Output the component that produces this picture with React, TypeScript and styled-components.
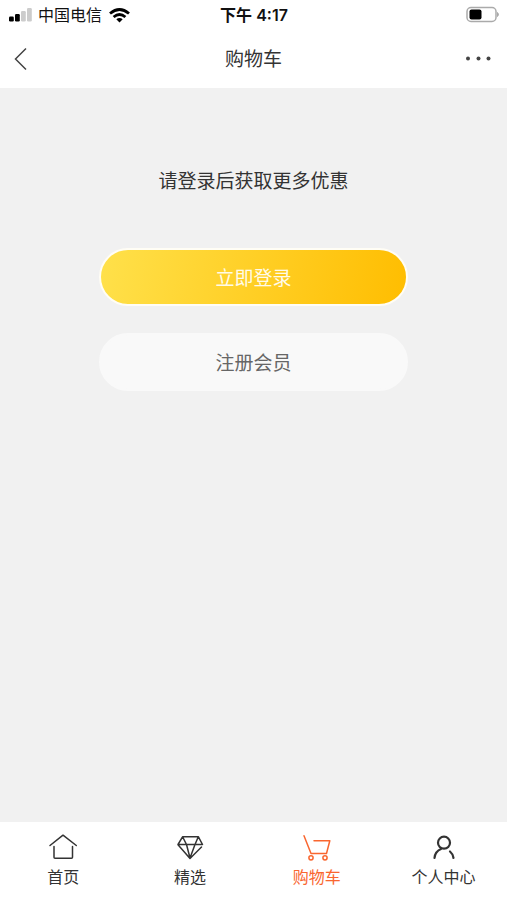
import React from "react";
import styled, { createGlobalStyle } from "styled-components";

const GlobalStyle = createGlobalStyle`
  * { box-sizing: border-box; }
  body {
    margin: 0;
    background: #f1f1f1;
    color: #333;
    font-family: "Liberation Sans", "Noto Sans CJK SC", sans-serif;
  }
  button { font-family: inherit; }
`;

const Screen = styled.div`
  display: flex;
  flex-direction: column;
  min-height: 100vh;
`;

const StatusBar = styled.div`
  display: grid;
  grid-template-columns: 1fr auto 1fr;
  align-items: center;
  height: 30px;
  padding: 0 8px 0 9px;
  background: #fff;
  color: #111;
  font: 500 16px/24px Inter, "Noto Sans CJK SC", sans-serif;
`;

const Carrier = styled.div`
  display: flex;
  align-items: center;
  gap: 6px;
  font-weight: 400;
`;

const Clock = styled.time`
  font-weight: 600;
`;

const Battery = styled.svg`
  justify-self: end;
`;

const Header = styled.header`
  display: grid;
  grid-template-columns: 1fr auto 1fr;
  align-items: center;
  height: 58px;
  padding: 0 13px;
  background: #fff;
`;

const Title = styled.h1`
  margin: 0;
  padding-top: 2px;
  font-size: 19px;
  line-height: 28px;
  font-weight: 400;
`;

const IconButton = styled.button<{ $end?: boolean }>`
  display: flex;
  justify-self: ${(p) => (p.$end ? "end" : "start")};
  padding: 0;
  border: 0;
  background: none;
  color: #444;
  cursor: pointer;
`;

const Content = styled.main`
  flex: 1;
  display: flex;
  flex-direction: column;
  align-items: center;
  padding-top: 80px;
`;

const Prompt = styled.p`
  margin: 0 0 52px;
  font-size: 19px;
  line-height: 28px;
`;

const Actions = styled.div`
  display: flex;
  flex-direction: column;
  gap: 27px;
  width: 61%;
`;

const Action = styled.button<{ $primary?: boolean }>`
  height: 58px;
  padding: 4px 0 0;
  border: 2px solid ${(p) => (p.$primary ? "#fffdf5" : "#f9f9f9")};
  border-radius: 29px;
  background: ${(p) =>
    p.$primary ? "linear-gradient(100deg, #ffe14b, #ffbd00) border-box" : "#f9f9f9"};
  color: ${(p) => (p.$primary ? "#fffbe8" : "#666")};
  font-size: 19px;
  line-height: 28px;
  cursor: pointer;
`;

const TabBar = styled.nav`
  display: grid;
  grid-template-columns: repeat(4, 1fr);
  height: 78px;
  padding-top: 9px;
  background: #fff;
`;

const Tab = styled.a<{ $active?: boolean }>`
  display: flex;
  flex-direction: column;
  align-items: center;
  gap: 3px;
  color: ${(p) => (p.$active ? "#f9662f" : "#333")};
  font-size: 16px;
  line-height: 24px;
  text-decoration: none;
`;

const LineIcon = styled.svg<{ $bold?: boolean }>`
  width: 32px;
  height: 32px;
  fill: none;
  stroke: currentColor;
  stroke-width: ${(p) => (p.$bold ? 2.2 : 1.5)};
  stroke-linecap: round;
  stroke-linejoin: round;
`;

const HomeIcon = () => (
  <LineIcon viewBox="0 0 32 32" aria-hidden="true">
    <path d="M3 14.5 16 4.2l13.3 10.3M7 15.5v10.8q0 1 1 1h16.5q1 0 1-1V15.5" />
  </LineIcon>
);

const DiamondIcon = () => (
  <LineIcon viewBox="0 0 32 32" aria-hidden="true">
    <path d="M28.5 13.5H4l4.7-7.8h15.6l4.2 7.8M4 13.7 16 27.5l11.5-11.5M8.7 6l3.8 7.5L16 27l5-13.5L24.2 6" />
  </LineIcon>
);

const CartIcon = () => (
  <LineIcon viewBox="0 0 32 32" aria-hidden="true">
    <path d="M3 4.7 10 22.5h15.5l3.3-12.7H13" />
    <circle cx="10" cy="26.8" r="2.1" />
    <circle cx="24" cy="26.8" r="2.1" />
  </LineIcon>
);

const PersonIcon = () => (
  <LineIcon viewBox="0 0 32 32" $bold aria-hidden="true">
    <circle cx="16" cy="11.7" r="6" />
    <path d="M13 18q-6 2.5-6.5 9M22 20.500q3 2.500 3.500 6.500" />
  </LineIcon>
);

const tabs = [
  { label: "首页", Icon: HomeIcon },
  { label: "精选", Icon: DiamondIcon },
  { label: "购物车", Icon: CartIcon, active: true },
  { label: "个人中心", Icon: PersonIcon },
];

export default function App() {
  return (
    <Screen>
      <GlobalStyle />
      <StatusBar>
        <Carrier>
          <svg width="23" height="14" viewBox="0 0 23 14" aria-hidden="true">
            <rect x="0" y="8.5" width="4.8" height="5" rx="1.2" />
            <rect x="6" y="6" width="4.8" height="7.5" rx="1.2" />
            <rect x="12" y="3" width="4.8" height="10.5" rx="1.2" fill="#ccc" />
            <rect x="18" y="0" width="4.8" height="13.5" rx="1.2" fill="#ccc" />
          </svg>
          <span>中国电信</span>
          <svg width="22" height="15" viewBox="0 0 22 15" fill="none" stroke="#000" strokeWidth="2.8" aria-hidden="true">
            <path d="M2 5.5Q11.500-2.500 21 5.500M5.600 9Q11.500 4 17.400 9" />
            <path d="M11.500 14.500 8.300 11.300Q11.500 8.700 14.700 11.300Z" fill="#000" stroke="none" />
          </svg>
        </Carrier>
        <Clock>下午 4:17</Clock>
        <Battery width="33" height="18" viewBox="0 0 33 18" role="img" aria-label="电池">
          <rect x="1" y="1.5" width="29" height="14" rx="4" fill="none" stroke="#aaa" strokeWidth="1.5" />
          <rect x="3.500" y="3.5" width="12" height="10" rx="2" />
          <path d="M31.500 6.500q2 2 0 4z" fill="#aaa" stroke="#aaa" />
        </Battery>
      </StatusBar>
      <Header>
        <IconButton type="button" aria-label="返回">
          <svg width="16" height="24" viewBox="0 0 16 24" fill="none" stroke="currentColor" strokeWidth="1.5" aria-hidden="true">
            <path d="M13 1.5 2.5 12 13 22.5" />
          </svg>
        </IconButton>
        <Title>购物车</Title>
        <IconButton type="button" aria-label="更多" $end>
          <svg width="28" height="24" viewBox="0 0 28 24" fill="currentColor" aria-hidden="true">
            <circle cx="2" cy="11.5" r="2" />
            <circle cx="12.500" cy="11.5" r="2" />
            <circle cx="22.500" cy="11.5" r="2" />
          </svg>
        </IconButton>
      </Header>
      <Content>
        <Prompt>请登录后获取更多优惠</Prompt>
        <Actions>
          <Action type="button" $primary>立即登录</Action>
          <Action type="button">注册会员</Action>
        </Actions>
      </Content>
      <TabBar>
        {tabs.map(({ label, Icon, active }) => (
          <Tab key={label} href="#" $active={active} aria-current={active ? "page" : undefined}>
            <Icon />
            {label}
          </Tab>
        ))}
      </TabBar>
    </Screen>
  );
}
